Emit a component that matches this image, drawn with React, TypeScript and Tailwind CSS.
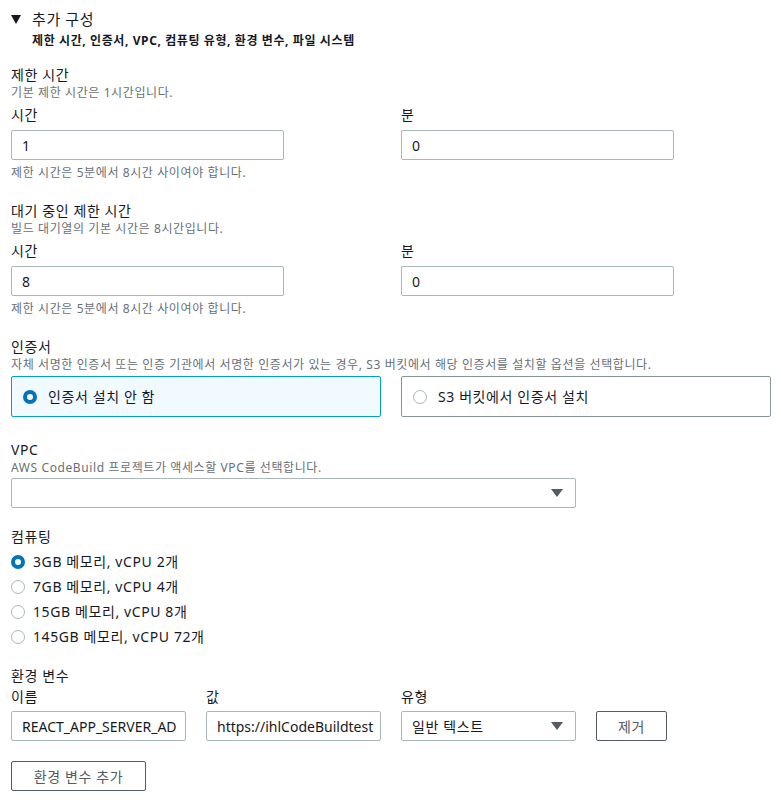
import React from "react";

const font = { fontFamily: '"Noto Sans", "Noto Sans CJK KR", sans-serif' };

function Label({ children }: { children: React.ReactNode }) {
  return <div className="text-[14px] leading-[20px] text-[#16191f]">{children}</div>;
}

function Desc({ children }: { children: React.ReactNode }) {
  return <div className="text-[12px] leading-[16px] text-[#687078]">{children}</div>;
}

function TextInput({ value, className = "" }: { value: string; className?: string }) {
  return (
    <div
      className={`h-[30px] border border-[#aab7b8] rounded-[2px] px-[10px] flex items-center text-[14px] text-[#16191f] overflow-hidden whitespace-nowrap ${className}`}
    >
      {value}
    </div>
  );
}

function SelectBox({ value, className = "" }: { value: string; className?: string }) {
  return (
    <div
      className={`h-[30px] border border-[#aab7b8] rounded-[2px] pl-[10px] pr-[12px] flex items-center justify-between text-[14px] text-[#16191f] ${className}`}
    >
      <span>{value}</span>
      <svg width="12" height="8" viewBox="0 0 12 8">
        <path d="M0 0 H12 L6 8 Z" fill="#545b64" />
      </svg>
    </div>
  );
}

function Radio({ checked }: { checked: boolean }) {
  return checked ? (
    <span className="w-[14px] h-[14px] rounded-full border-[4px] border-[#0073bb] bg-white shrink-0" />
  ) : (
    <span className="w-[14px] h-[14px] rounded-full border border-[#aab7b8] bg-white shrink-0" />
  );
}

function TimeBlock({ title, desc, hours }: { title: string; desc: string; hours: string }) {
  return (
    <div>
      <Label>{title}</Label>
      <Desc>{desc}</Desc>
      <div className="grid grid-cols-[370px_370px] gap-x-[20px] mt-[4px]">
        <div>
          <Label>시간</Label>
          <TextInput value={hours} className="w-[273px] mt-[5px]" />
        </div>
        <div>
          <Label>분</Label>
          <TextInput value="0" className="w-[273px] mt-[5px]" />
        </div>
      </div>
      <div className="mt-[5px]">
        <Desc>제한 시간은 5분에서 8시간 사이여야 합니다.</Desc>
      </div>
    </div>
  );
}

export default function App() {
  const computes = [
    "3GB 메모리, vCPU 2개",
    "7GB 메모리, vCPU 4개",
    "15GB 메모리, vCPU 8개",
    "145GB 메모리, vCPU 72개",
  ];

  return (
    <div
      style={font}
      className="w-[781px] h-[807px] bg-white pl-[11px] pt-[8px] text-[#16191f] tracking-[0.6px]"
    >
      {/* header */}
      <div className="flex items-center gap-[11px] h-[22px]">
        <svg width="10" height="9" viewBox="0 0 10 9">
          <path d="M0 0 H10 L5 9 Z" fill="#16191f" />
        </svg>
        <span className="text-[15px] leading-[22px]">추가 구성</span>
      </div>
      <div className="pl-[21px] text-[12px] leading-[18px] font-bold mt-[2px]">
        제한 시간, 인증서, VPC, 컴퓨팅 유형, 환경 변수, 파일 시스템
      </div>

      <div className="mt-[15px]">
        <TimeBlock title="제한 시간" desc="기본 제한 시간은 1시간입니다." hours="1" />
      </div>
      <div className="mt-[20px]">
        <TimeBlock title="대기 중인 제한 시간" desc="빌드 대기열의 기본 시간은 8시간입니다." hours="8" />
      </div>

      {/* certificate */}
      <div className="mt-[20px]">
        <Label>인증서</Label>
        <Desc>
          자체 서명한 인증서 또는 인증 기관에서 서명한 인증서가 있는 경우, S3 버킷에서 해당 인증서를 설치할 옵션을 선택합니다.
        </Desc>
        <div className="grid grid-cols-[370px_370px] gap-x-[20px] mt-[3px]">
          <div className="h-[41px] border border-[#00a1c9] bg-[#f1faff] rounded-[2px] flex items-center gap-[11px] pl-[11px] text-[14px]">
            <Radio checked />
            <span>인증서 설치 안 함</span>
          </div>
          <div className="h-[41px] border border-[#879596] rounded-[2px] flex items-center gap-[11px] pl-[11px] text-[14px]">
            <Radio checked={false} />
            <span>S3 버킷에서 인증서 설치</span>
          </div>
        </div>
      </div>

      {/* VPC */}
      <div className="mt-[23px]">
        <Label>VPC</Label>
        <Desc>AWS CodeBuild 프로젝트가 액세스할 VPC를 선택합니다.</Desc>
        <SelectBox value="" className="w-[565px] mt-[2px]" />
      </div>

      {/* compute */}
      <div className="mt-[19px]">
        <Label>컴퓨팅</Label>
        <div className="flex flex-col mt-[2px]">
          {computes.map((c, i) => (
            <div key={c} className="h-[25px] flex items-center gap-[8px] text-[14px]">
              <Radio checked={i === 0} />
              <span>{c}</span>
            </div>
          ))}
        </div>
      </div>

      {/* env vars */}
      <div className="mt-[17px]">
        <Label>환경 변수</Label>
        <div className="grid grid-cols-[175px_175px_175px_auto] gap-x-[20px] items-end mt-[1px] w-fit">
          <Label>이름</Label>
          <Label>값</Label>
          <Label>유형</Label>
          <div />
          <TextInput value="REACT_APP_SERVER_AD" className="mt-[4px] tracking-normal" />
          <TextInput value="https://ihlCodeBuildtest" className="mt-[4px] tracking-normal" />
          <SelectBox value="일반 텍스트" className="mt-[4px]" />
          <button className="h-[30px] w-[71px] border border-[#545b64] rounded-[2px] text-[14px] text-[#545b64] bg-white">
            제거
          </button>
        </div>
        <button className="mt-[20px] h-[30px] w-[135px] border border-[#545b64] rounded-[2px] text-[14px] text-[#545b64] bg-white">
          환경 변수 추가
        </button>
      </div>
    </div>
  );
}
